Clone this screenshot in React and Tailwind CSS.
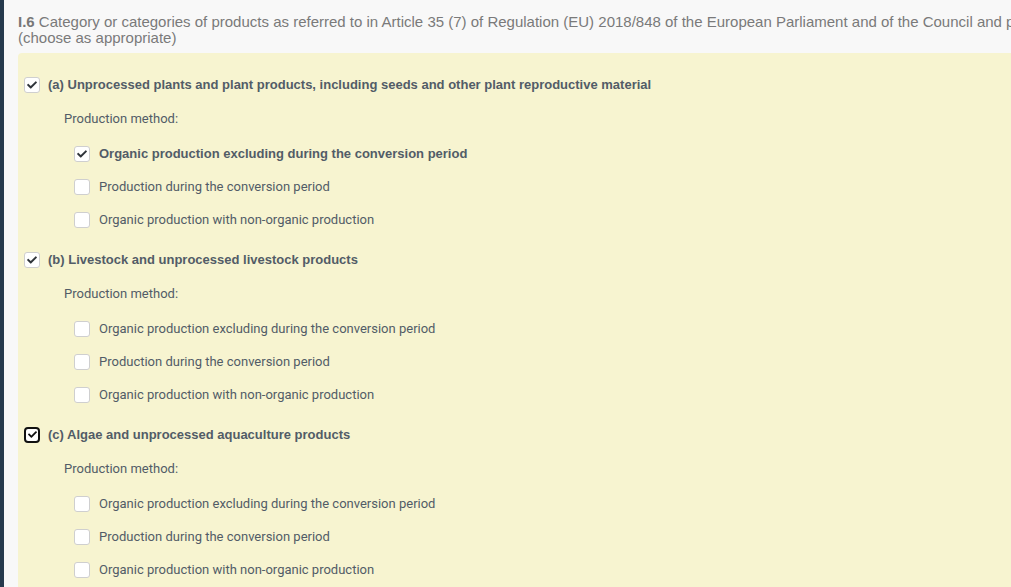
import React from 'react'

const CHECK = 'M173.898 439.404l-166.4-166.4c-9.997-9.997-9.997-26.206 0-36.204l36.203-36.204c9.997-9.998 26.207-9.998 36.204 0L192 312.69 432.095 72.596c9.997-9.997 26.207-9.997 36.204 0l36.203 36.204c9.997 9.997 9.997 26.206 0 36.204l-294.4 294.401c-9.998 9.997-26.207 9.997-36.204-.001z'

const methods = [
  'Organic production excluding during the conversion period',
  'Production during the conversion period',
  'Organic production with non-organic production',
]

const groups = [
  { label: '(a) Unprocessed plants and plant products, including seeds and other plant reproductive material', state: 'checked', picked: 0 },
  { label: '(b) Livestock and unprocessed livestock products', state: 'checked', picked: -1 },
  { label: '(c) Algae and unprocessed aquaculture products', state: 'focus', picked: -1 },
]

function Box({ state }) {
  if (state === 'focus') {
    return (
      <span className="w-4 h-4 shrink-0 rounded-[4px] bg-white border-2 border-[#111] grid place-items-center">
        <svg viewBox="0 0 512 512" className="w-[9px] h-[9px]" fill="#111"><path d={CHECK} /></svg>
      </span>
    )
  }
  return (
    <span className="w-4 h-4 shrink-0 rounded-[3px] bg-white border border-[#cfcfcf] grid place-items-center">
      {state === 'checked' && (
        <svg viewBox="0 0 512 512" className="w-[10px] h-[10px]" fill="#2f3439"><path d={CHECK} /></svg>
      )}
    </span>
  )
}

const bold = "font-bold font-['Liberation_Sans',Arial,sans-serif]"

export default function App() {
  return (
    <div className="w-[1011px] h-[587px] overflow-hidden flex bg-[#f8f8f8]">
      <div className="w-1 shrink-0 bg-[#263a4d]" />
      <div className="flex-1 min-w-0 pl-[14px] pt-[14px]">
        <div className="w-[1200px] text-[15px] leading-[16px] text-[#7a7a7a] font-['Liberation_Sans',Arial,sans-serif]">
          <p className="whitespace-nowrap">
            <b className="text-[#777]">I.6</b> Category or categories of products as referred to in Article 35 (7) of Regulation (EU) 2018/848 of the European Parliament and of the Council and point
          </p>
          <p>(choose as appropriate)</p>
        </div>

        <div className="mt-[7px] w-[1200px] h-[600px] rounded-tl-[4px] bg-[#f7f4d0] pt-[15px] pl-[6px] text-[13px] text-[#525c67] font-['Roboto',Arial,sans-serif]">
          {groups.map((g, gi) => (
            <div key={gi} className="pb-[7px]">
              <div className="h-[33px] flex items-center gap-2">
                <Box state={g.state} />
                <span className={bold}>{g.label}</span>
              </div>
              <div className="h-[36px] flex items-center pl-[40px]">Production method:</div>
              {methods.map((m, mi) => (
                <div key={mi} className="h-[33px] flex items-center gap-[9px] pl-[50px]">
                  <Box state={mi === g.picked ? 'checked' : 'empty'} />
                  <span className={mi === g.picked ? bold : ''}>{m}</span>
                </div>
              ))}
            </div>
          ))}
        </div>
      </div>
    </div>
  )
}
